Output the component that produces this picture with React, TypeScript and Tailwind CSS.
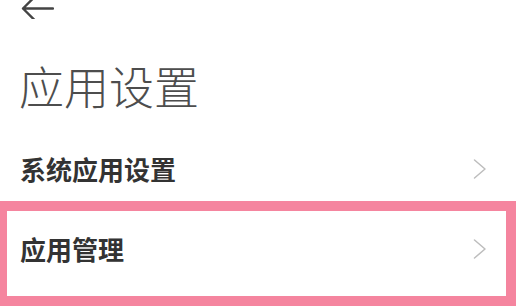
const rows = ['系统应用设置', '应用管理']

function Chevron() {
  return (
    <svg width="14" height="22" viewBox="0 0 14 22" fill="none">
      <path d="M1.5 2 L12 11 L1.5 20" stroke="#bdbdbd" strokeWidth="1.5" strokeLinecap="round" strokeLinejoin="round" />
    </svg>
  )
}

function App() {
  return (
    <div
      className="relative w-[522px] h-[306px] overflow-hidden bg-white"
      style={{ fontFamily: '"Noto Sans CJK SC", "Noto Sans", sans-serif' }}
    >
      <div className="h-[18px] pl-[20px]">
        <svg width="34" height="20" viewBox="0 0 34 20" fill="none" className="-mt-[1px]">
          <path d="M3 9.5 L33 9.5 M15 -2.5 L3 9.5 L15 21.5" stroke="#444" strokeWidth="2.4" strokeLinecap="round" strokeLinejoin="round" />
        </svg>
      </div>

      <h1 className="mt-[47px] pl-[19px] text-[45px] leading-[44px] font-light text-[#4d4d4d]">应用设置</h1>

      <div className="mt-[21px]">
        {rows.map((label) => (
          <div key={label} className="flex h-[80px] items-center justify-between pl-[20px] pr-[35px]">
            <span className="text-[26px] leading-[26px] font-bold text-[#333]">{label}</span>
            <Chevron />
          </div>
        ))}
      </div>

      {/* annotation highlight */}
      <div className="absolute left-[-3px] top-[201px] w-[519px] h-[105px] border-[10px] border-[#f5859f]" />
    </div>
  )
}

export default App
